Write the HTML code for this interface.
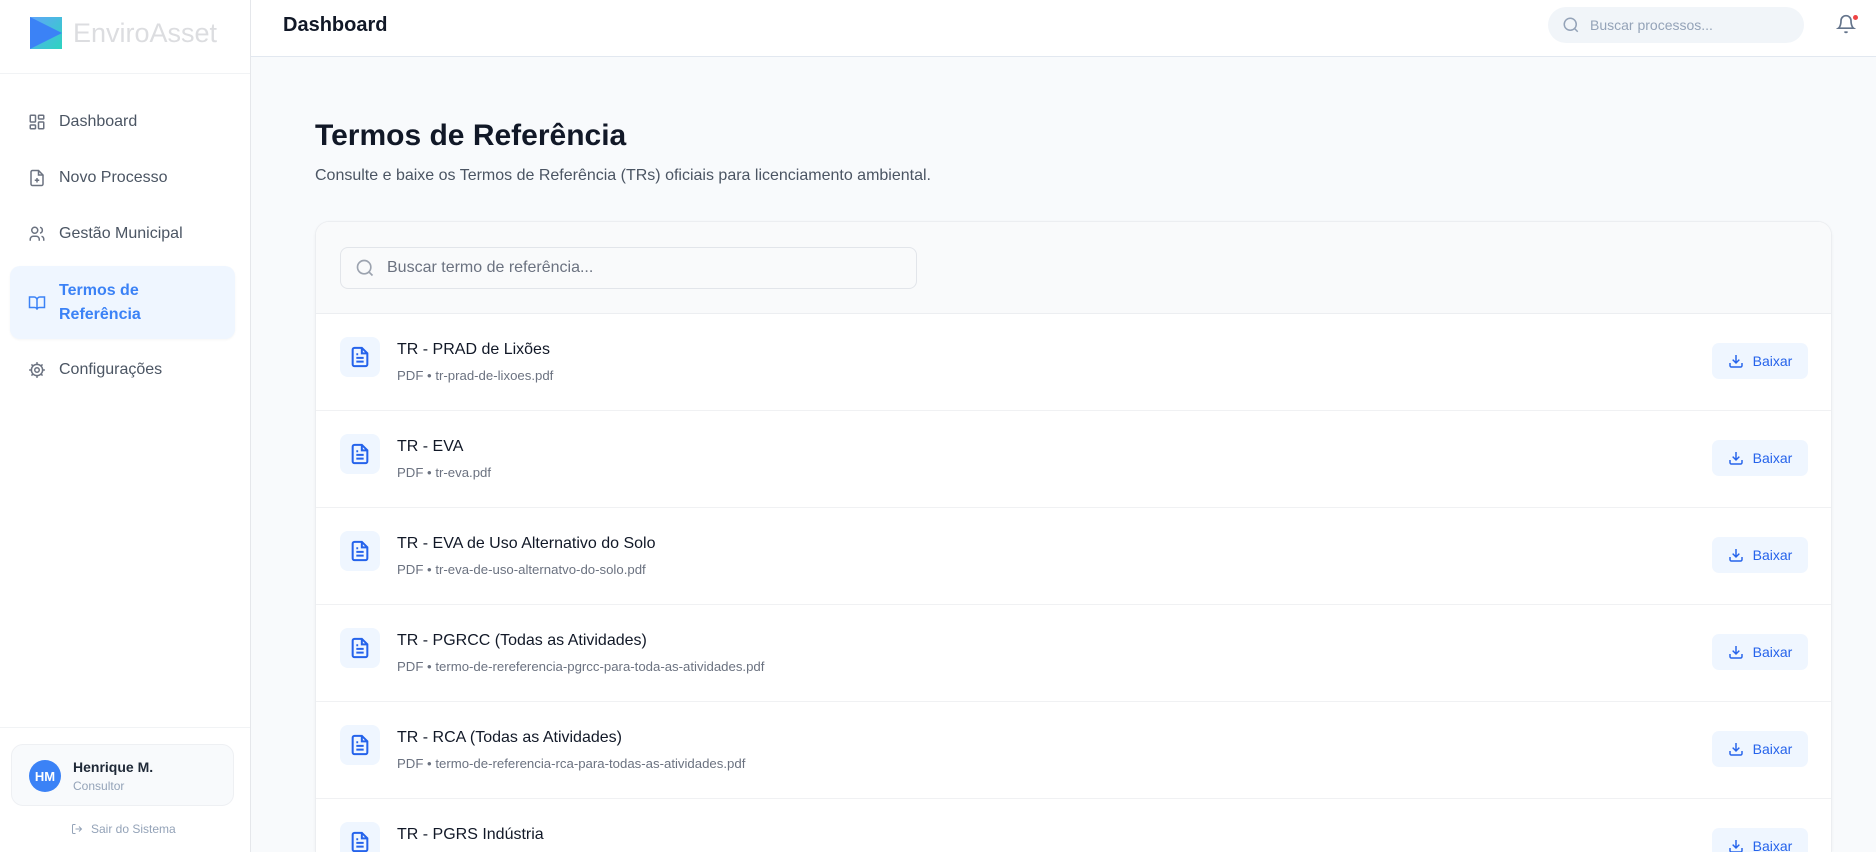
<!DOCTYPE html>
<html><head><meta charset="utf-8"><style>
*{box-sizing:border-box;margin:0;padding:0}
html{width:1876px;height:852px;overflow:hidden}
body{width:1876px;height:852px;overflow:hidden;font-family:"Liberation Sans",sans-serif;background:#f8fafc;position:relative}
.sb{position:absolute;left:0;top:0;width:251px;height:852px;background:#fff;border-right:1px solid #e5e7eb}
.logobg{position:absolute;left:30px;top:17px;width:32px;height:32px;background:linear-gradient(135deg,#60a5fa,#2dd4bf)}
.logo2{position:absolute;left:30px;top:17px;width:32px;height:32px;background:#3b82f6;clip-path:polygon(0 0,100% 50%,0 100%)}
.brand{position:absolute;left:73px;top:17px;font-size:27px;color:#dcdde0;line-height:32px}
.sbl{position:absolute;left:0;right:0;top:73px;border-top:1px solid #f1f3f5}
.nav{position:absolute;left:28px;font-size:16px;color:#4b5563;display:flex;align-items:center;gap:13px}
.nav svg{width:18px;height:18px}
.act{position:absolute;left:10px;top:266px;width:225px;height:73px;background:#eff6ff;border-radius:10px;box-shadow:0 1px 2px rgba(0,0,0,.04)}
.bl{position:absolute;left:0;right:0;top:727px;border-top:1px solid #f1f3f5}
.uc{position:absolute;left:11px;top:744px;width:223px;height:62px;border:1px solid #eef0f3;background:#f8fafc;border-radius:12px}
.av{position:absolute;left:17px;top:15px;width:32px;height:32px;border-radius:50%;background:#3b82f6;color:#fff;font-weight:bold;font-size:13px;display:flex;align-items:center;justify-content:center}
.hd{position:absolute;left:251px;top:0;right:0;height:57px;background:#fff;border-bottom:1px solid #e2e8f0}
.card{position:absolute;left:315px;top:221px;width:1517px;height:631px;background:#fff;border:1px solid #eceef1;border-bottom:none;border-radius:14px 14px 0 0;overflow:hidden;box-shadow:0 1px 3px rgba(0,0,0,.04)}
.ct{height:92px;background:#f9fafb;border-bottom:1px solid #eceef1;position:relative}
.si{position:absolute;left:24px;top:25px;width:577px;height:42px;border:1px solid #e2e5ea;border-radius:8px;background:#f9fafb;display:flex;align-items:center;padding-left:14px;gap:12px;color:#6b7280;font-size:16px}
.row{height:97px;border-bottom:1px solid #f0f1f3;position:relative}
.ib{position:absolute;left:24px;top:23px;width:40px;height:40px;border-radius:8px;background:#eff6ff;display:flex;align-items:center;justify-content:center}
.t{position:absolute;left:81px;top:27px;font-size:16px;color:#111827}
.s{position:absolute;left:81px;top:54px;font-size:13.2px;color:#6b7280}
.btn{position:absolute;left:1396px;top:29px;width:96px;height:36px;border-radius:7px;background:#eff6ff;color:#2563eb;font-size:14px;display:flex;align-items:center;justify-content:center;gap:9px}
</style></head><body>
<div class="sb">
<div class="logobg"></div><div class="logo2"></div>
<div class="brand">EnviroAsset</div>
<div class="sbl"></div>
<div class="nav" style="top:113px"><svg viewBox="0 0 24 24" fill="none" stroke="#6b7280" stroke-width="2"><rect x="3" y="3" width="7" height="9" rx="1"/><rect x="14" y="3" width="7" height="5" rx="1"/><rect x="14" y="12" width="7" height="9" rx="1"/><rect x="3" y="16" width="7" height="5" rx="1"/></svg>Dashboard</div>
<div class="nav" style="top:169px"><svg viewBox="0 0 24 24" fill="none" stroke="#6b7280" stroke-width="2"><path d="M14 2H6a2 2 0 0 0-2 2v16a2 2 0 0 0 2 2h12a2 2 0 0 0 2-2V8z"/><path d="M14 2v6h6M12 12v6M9 15h6"/></svg>Novo Processo</div>
<div class="nav" style="top:225px"><svg viewBox="0 0 24 24" fill="none" stroke="#6b7280" stroke-width="2"><circle cx="9" cy="7" r="4"/><path d="M3 21v-2a4 4 0 0 1 4-4h4a4 4 0 0 1 4 4v2M16 3.1a4 4 0 0 1 0 7.8M21 21v-2a4 4 0 0 0-3-3.9"/></svg>Gestão Municipal</div>
<div class="act"></div>
<div class="nav" style="top:279px;color:#3b82f6;font-weight:bold;line-height:24px"><svg viewBox="0 0 24 24" fill="none" stroke="#3b82f6" stroke-width="2"><path d="M2 4h6a4 4 0 0 1 4 4v13a3 3 0 0 0-3-3H2zM22 4h-6a4 4 0 0 0-4 4v13a3 3 0 0 1 3-3h7z"/></svg><span>Termos de<br>Referência</span></div>
<div class="nav" style="top:361px"><svg viewBox="0 0 24 24" fill="none" stroke="#6b7280" stroke-width="2"><circle cx="12" cy="12" r="3"/><circle cx="12" cy="12" r="7.5"/><path d="M12 1.5v3M12 19.5v3M1.5 12h3M19.5 12h3M4.6 4.6l2.1 2.1M17.3 17.3l2.1 2.1M4.6 19.4l2.1-2.1M17.3 6.7l2.1-2.1"/></svg>Configurações</div>
<div class="bl"></div>
<div class="uc"><div class="av">HM</div>
<div style="position:absolute;left:61px;top:14px;font-size:14px;font-weight:bold;color:#1f2937">Henrique M.</div>
<div style="position:absolute;left:61px;top:34px;font-size:12px;color:#94a3b8">Consultor</div></div>
<div style="position:absolute;left:71px;top:822px;font-size:12px;color:#94a3b8;display:flex;gap:8px;align-items:center"><svg width="12" height="12" viewBox="0 0 24 24" fill="none" stroke="#94a3b8" stroke-width="2"><path d="M9 21H5a2 2 0 0 1-2-2V5a2 2 0 0 1 2-2h4M16 17l5-5-5-5M21 12H9"/></svg>Sair do Sistema</div>
</div>
<div class="hd">
<div style="position:absolute;left:32px;top:14px;font-size:20px;font-weight:bold;color:#111827">Dashboard</div>
<div style="position:absolute;left:1297px;top:7px;width:256px;height:36px;border-radius:18px;background:#f1f5f9;display:flex;align-items:center;padding-left:14px;gap:10px;color:#94a3b8;font-size:14px"><svg width="18" height="18" viewBox="0 0 24 24" fill="none" stroke="#94a3b8" stroke-width="2"><circle cx="11" cy="11" r="8"/><path d="M21 21l-4.3-4.3"/></svg>Buscar processos...</div>
<svg style="position:absolute;left:1585px;top:14px" width="20" height="20" viewBox="0 0 24 24" fill="none" stroke="#64748b" stroke-width="2"><path d="M6 8a6 6 0 0 1 12 0c0 7 3 9 3 9H3s3-2 3-9M10.3 21a1.9 1.9 0 0 0 3.4 0"/></svg>
<div style="position:absolute;left:1602px;top:15px;width:5px;height:5px;border-radius:50%;background:#ef4444"></div>
</div>
<div style="position:absolute;left:315px;top:119px;font-size:30px;font-weight:bold;color:#111827">Termos de Referência</div>
<div style="position:absolute;left:315px;top:167px;font-size:16px;color:#4b5563">Consulte e baixe os Termos de Referência (TRs) oficiais para licenciamento ambiental.</div>
<div class="card">
<div class="ct"><div class="si"><svg width="20" height="20" viewBox="0 0 24 24" fill="none" stroke="#9ca3af" stroke-width="2"><circle cx="11" cy="11" r="8"/><path d="M21 21l-4.3-4.3"/></svg>Buscar termo de referência...</div></div>
<div class="row"><div class="ib"><svg width="22" height="22" viewBox="0 0 24 24" fill="none" stroke="#2563eb" stroke-width="2.2"><path d="M14 2H6a2 2 0 0 0-2 2v16a2 2 0 0 0 2 2h12a2 2 0 0 0 2-2V8z"/><path d="M14 2v6h6M8 13h8M8 17h8M8 9h2"/></svg></div><div class="t">TR - PRAD de Lixões</div><div class="s">PDF • tr-prad-de-lixoes.pdf</div><div class="btn"><svg width="16" height="16" viewBox="0 0 24 24" fill="none" stroke="#2563eb" stroke-width="2.2"><path d="M21 15v4a2 2 0 0 1-2 2H5a2 2 0 0 1-2-2v-4M7 10l5 5 5-5M12 15V3"/></svg>Baixar</div></div>
<div class="row"><div class="ib"><svg width="22" height="22" viewBox="0 0 24 24" fill="none" stroke="#2563eb" stroke-width="2.2"><path d="M14 2H6a2 2 0 0 0-2 2v16a2 2 0 0 0 2 2h12a2 2 0 0 0 2-2V8z"/><path d="M14 2v6h6M8 13h8M8 17h8M8 9h2"/></svg></div><div class="t">TR - EVA</div><div class="s">PDF • tr-eva.pdf</div><div class="btn"><svg width="16" height="16" viewBox="0 0 24 24" fill="none" stroke="#2563eb" stroke-width="2.2"><path d="M21 15v4a2 2 0 0 1-2 2H5a2 2 0 0 1-2-2v-4M7 10l5 5 5-5M12 15V3"/></svg>Baixar</div></div>
<div class="row"><div class="ib"><svg width="22" height="22" viewBox="0 0 24 24" fill="none" stroke="#2563eb" stroke-width="2.2"><path d="M14 2H6a2 2 0 0 0-2 2v16a2 2 0 0 0 2 2h12a2 2 0 0 0 2-2V8z"/><path d="M14 2v6h6M8 13h8M8 17h8M8 9h2"/></svg></div><div class="t">TR - EVA de Uso Alternativo do Solo</div><div class="s">PDF • tr-eva-de-uso-alternatvo-do-solo.pdf</div><div class="btn"><svg width="16" height="16" viewBox="0 0 24 24" fill="none" stroke="#2563eb" stroke-width="2.2"><path d="M21 15v4a2 2 0 0 1-2 2H5a2 2 0 0 1-2-2v-4M7 10l5 5 5-5M12 15V3"/></svg>Baixar</div></div>
<div class="row"><div class="ib"><svg width="22" height="22" viewBox="0 0 24 24" fill="none" stroke="#2563eb" stroke-width="2.2"><path d="M14 2H6a2 2 0 0 0-2 2v16a2 2 0 0 0 2 2h12a2 2 0 0 0 2-2V8z"/><path d="M14 2v6h6M8 13h8M8 17h8M8 9h2"/></svg></div><div class="t">TR - PGRCC (Todas as Atividades)</div><div class="s">PDF • termo-de-rereferencia-pgrcc-para-toda-as-atividades.pdf</div><div class="btn"><svg width="16" height="16" viewBox="0 0 24 24" fill="none" stroke="#2563eb" stroke-width="2.2"><path d="M21 15v4a2 2 0 0 1-2 2H5a2 2 0 0 1-2-2v-4M7 10l5 5 5-5M12 15V3"/></svg>Baixar</div></div>
<div class="row"><div class="ib"><svg width="22" height="22" viewBox="0 0 24 24" fill="none" stroke="#2563eb" stroke-width="2.2"><path d="M14 2H6a2 2 0 0 0-2 2v16a2 2 0 0 0 2 2h12a2 2 0 0 0 2-2V8z"/><path d="M14 2v6h6M8 13h8M8 17h8M8 9h2"/></svg></div><div class="t">TR - RCA (Todas as Atividades)</div><div class="s">PDF • termo-de-referencia-rca-para-todas-as-atividades.pdf</div><div class="btn"><svg width="16" height="16" viewBox="0 0 24 24" fill="none" stroke="#2563eb" stroke-width="2.2"><path d="M21 15v4a2 2 0 0 1-2 2H5a2 2 0 0 1-2-2v-4M7 10l5 5 5-5M12 15V3"/></svg>Baixar</div></div>
<div class="row"><div class="ib"><svg width="22" height="22" viewBox="0 0 24 24" fill="none" stroke="#2563eb" stroke-width="2.2"><path d="M14 2H6a2 2 0 0 0-2 2v16a2 2 0 0 0 2 2h12a2 2 0 0 0 2-2V8z"/><path d="M14 2v6h6M8 13h8M8 17h8M8 9h2"/></svg></div><div class="t">TR - PGRS Indústria</div><div class="s">PDF • tr-pgrs-industria.pdf</div><div class="btn"><svg width="16" height="16" viewBox="0 0 24 24" fill="none" stroke="#2563eb" stroke-width="2.2"><path d="M21 15v4a2 2 0 0 1-2 2H5a2 2 0 0 1-2-2v-4M7 10l5 5 5-5M12 15V3"/></svg>Baixar</div></div>
</div>
</body></html>
